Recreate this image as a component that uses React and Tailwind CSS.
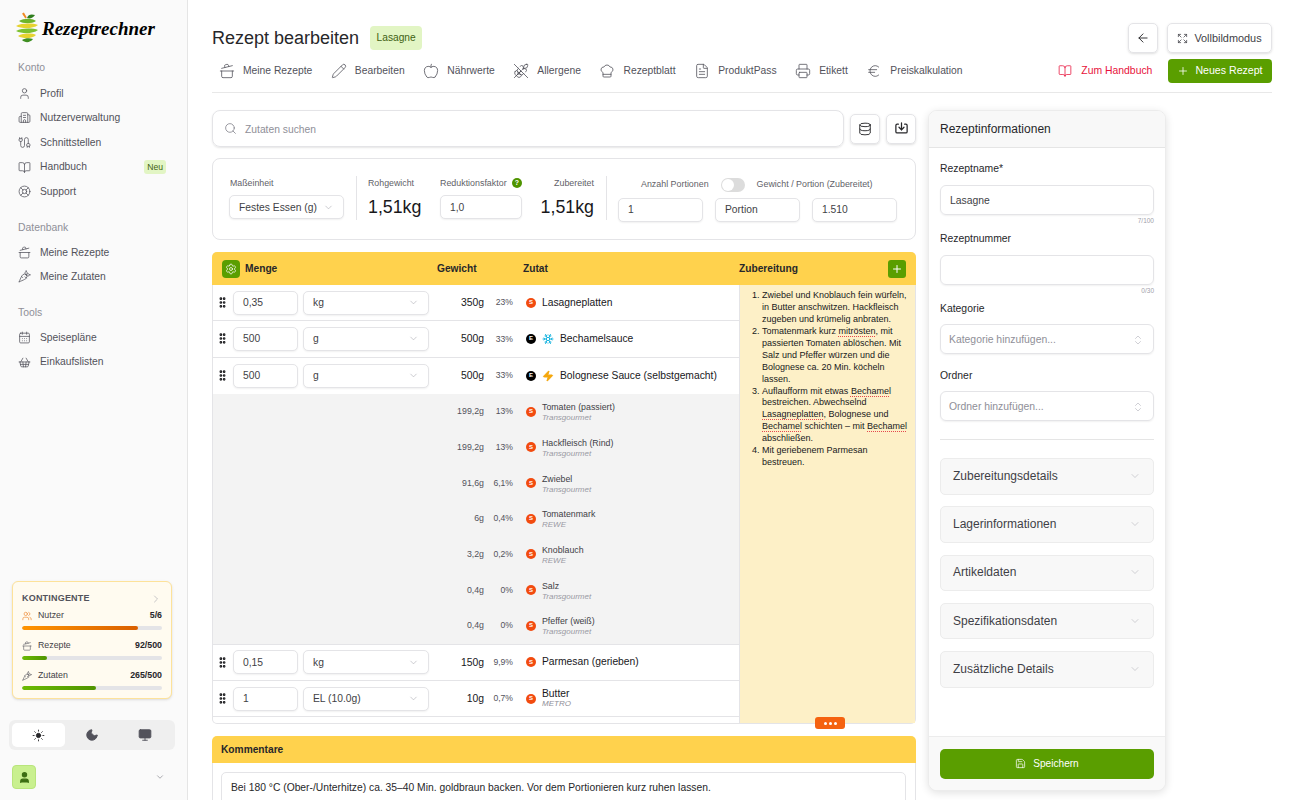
import React from "react";
import {
  Apple, ArrowLeft, BookOpen, Building2, Cable, CalendarDays, Carrot, ChefHat, ChevronDown, ChevronRight,
  ChevronsUpDown, CookingPot, Database, Euro, Expand, FileText, GripVertical, LifeBuoy, Monitor, Moon, Pencil,
  Plus, Printer, Save, Search, Settings, ShoppingBasket, Snowflake, Sun, User, Users, WheatOff, Zap,
} from "lucide-react";

const Logo = () => (
  <div className="flex items-center gap-[3px] h-[36px]">
    <svg width="24" height="32" viewBox="0 0 24 32" fill="none">
      <path d="M11 6 C10 4 9 3 8 1" stroke="#f08a24" strokeWidth="2" />
      <path d="M12 6 C13 2 17 2 20 3 C18 6 15 7 12 6Z" fill="#2f7d1e" />
      <path d="M4 9 C9 6 17 6 21 9 C17 12 8 12 4 9Z" fill="#6fb52c" />
      <path d="M1 14 C7 11 17 11 23 13 C18 17 7 17 1 14Z" fill="#e6d32f" />
      <path d="M1 19 C7 16 18 16 23 18 C18 22 7 22 1 19Z" fill="#7cc030" />
      <path d="M3 24 C8 21 17 21 21 23 C17 27 8 27 3 24Z" fill="#e6d32f" />
      <path d="M7 28 C10 26 15 26 18 27 C15 31 10 31 7 28Z" fill="#3f8f22" />
    </svg>
    <span className="text-[19px] leading-none font-bold italic text-black font-['Liberation_Serif',serif]">
      Rezeptrechner
    </span>
  </div>
);

const SideItem = ({ icon: Icon, label, badge }) => (
  <div className="flex items-center h-[24.6px] pl-[18px] pr-[21px] text-[#52525b]">
    <Icon size={13} strokeWidth={1.4} className="text-[#52525b] shrink-0" />
    <span className="ml-[9px] text-[10.3px]">{label}</span>
    {badge && (
      <span className="ml-auto bg-[#e2f5c4] text-[#3f6212] text-[8.6px] leading-none px-[3px] py-[3px] rounded-[3px]">
        {badge}
      </span>
    )}
  </div>
);

const SideTitle = ({ children, className }) => (
  <div className={`pl-[18px] h-[18px] flex items-center text-[10.4px] text-[#8f8f98] ${className}`}>{children}</div>
);

const Quota = ({ icon: Icon, label, value, max, pct, bar, iconColor }) => (
  <div className="mt-[9px] first:mt-0">
    <div className="flex items-center h-[14px] text-[8.8px] text-[#3f3f46]">
      <Icon size={10} strokeWidth={1.4} className={iconColor} />
      <span className="ml-[6px]">{label}</span>
      <span className="ml-auto font-bold text-[#27272a]">
        {value}/{max}
      </span>
    </div>
    <div className="mt-[3px] h-[4px] rounded-full bg-[#e4e4e7] overflow-hidden">
      <div className={`h-full rounded-full bg-gradient-to-r ${bar}`} style={{ width: `${pct}%` }} />
    </div>
  </div>
);

const Sidebar = () => (
  <aside className="w-[188px] h-full shrink-0 bg-[#fafafa] border-r border-[#e5e5e5] flex flex-col">
    <div className="pl-[15px] pt-[10px]">
      <Logo />
    </div>
    <SideTitle className="mt-[13px] mb-[4px]">Konto</SideTitle>
    <SideItem icon={User} label="Profil" />
    <SideItem icon={Building2} label="Nutzerverwaltung" />
    <SideItem icon={Cable} label="Schnittstellen" />
    <SideItem icon={BookOpen} label="Handbuch" badge="Neu" />
    <SideItem icon={LifeBuoy} label="Support" />
    <SideTitle className="mt-[15px] mb-[3px]">Datenbank</SideTitle>
    <SideItem icon={CookingPot} label="Meine Rezepte" />
    <SideItem icon={Carrot} label="Meine Zutaten" />
    <SideTitle className="mt-[15px] mb-[3px]">Tools</SideTitle>
    <SideItem icon={CalendarDays} label="Speisepläne" />
    <SideItem icon={ShoppingBasket} label="Einkaufslisten" />

    <div className="mt-auto ml-[12px] mr-[15px] h-[118px] rounded-[6px] border border-[#fde29a] bg-[#fffbf0] shadow-sm px-[9px] pt-[10px]">
      <div className="flex items-center justify-between h-[13px] mb-[4px]">
        <span className="text-[9px] font-bold tracking-[0.2px] text-[#52525b]">KONTINGENTE</span>
        <ChevronRight size={12} strokeWidth={1.2} className="text-[#a1a1aa]" />
      </div>
      <div>
        <Quota icon={Users} label="Nutzer" value="5" max="6" pct={83} bar="from-[#ff9500] to-[#d95f00]" iconColor="text-[#ea7a1a]" />
        <Quota icon={CookingPot} label="Rezepte" value="92" max="500" pct={18} bar="from-[#6cbb04] to-[#4f9400]" iconColor="text-[#52525b]" />
        <Quota icon={Carrot} label="Zutaten" value="265" max="500" pct={53} bar="from-[#6cbb04] to-[#4f9400]" iconColor="text-[#52525b]" />
      </div>
    </div>

    <div className="mt-[21px] ml-[9px] mr-[12px] h-[30px] rounded-[6px] bg-[#efefef] p-[3px] flex">
      <div className="flex-1 rounded-[5px] bg-white flex items-center justify-center">
        <Sun size={13} strokeWidth={1.6} className="text-[#27272a]" fill="#27272a" />
      </div>
      <div className="flex-1 flex items-center justify-center">
        <Moon size={14} strokeWidth={1.6} className="text-[#52525b]" fill="#52525b" />
      </div>
      <div className="flex-1 flex items-center justify-center">
        <Monitor size={14} strokeWidth={1.6} className="text-[#52525b]" fill="#52525b" />
      </div>
    </div>

    <div className="mt-[15px] mb-[11px] pl-[12px] pr-[22px] flex items-center justify-between">
      <div className="w-[24px] h-[24px] rounded-[4px] bg-[#c9f08f] border border-[#b9e57c] flex items-center justify-center">
        <User size={13} strokeWidth={2} className="text-[#3c6e12]" fill="#3c6e12" />
      </div>
      <ChevronDown size={10} strokeWidth={1.4} className="text-[#71717a]" />
    </div>
  </aside>
);

const NavItem = ({ icon: Icon, label }) => (
  <div className="flex items-center text-[#52525b]">
    <Icon size={16} strokeWidth={1.2} />
    <span className="ml-[8px] text-[10.3px]">{label}</span>
  </div>
);

const inputClass =
  "h-[24px] rounded-[5px] border border-[#e4e4e7] bg-white shadow-[0_1px_2px_rgba(0,0,0,0.06)] flex items-center text-[10.3px] text-[#3f3f46]";

const Menu = ({ className, children }) => (
  <div className={`${inputClass} px-[9px] justify-between ${className}`}>
    <span>{children}</span>
    <ChevronDown size={11} strokeWidth={1.2} className="text-[#a1a1aa]" />
  </div>
);

const Field = ({ className, children }) => <div className={`${inputClass} px-[9px] ${className}`}>{children}</div>;

const Grade = ({ letter, black }) => (
  <span
    className={`w-[10px] h-[10px] rounded-full shrink-0 flex items-center justify-center text-[6px] font-bold text-white ${
      black ? "bg-black" : "bg-[#f24b0f]"
    }`}
  >
    {letter}
  </span>
);

const Row = ({ amount, unit, weight, pct, name, sub, letter = "S", black, icon, border }) => (
  <div className={`h-[36.3px] flex items-center ${border ? "border-b border-[#e4e4e7]" : ""}`}>
    <GripVertical size={13} strokeWidth={3} className="ml-[3px] text-[#18181b] shrink-0" />
    <Field className="ml-[4px] w-[65px] shrink-0">{amount}</Field>
    <Menu className="ml-[5px] w-[126px] shrink-0">{unit}</Menu>
    <span className="w-[55px] text-right text-[10.4px] text-[#18181b] shrink-0">{weight}</span>
    <span className="w-[29px] text-right text-[8.6px] text-[#52525b] shrink-0">{pct}</span>
    <span className="ml-[13px] flex items-center">
      <Grade letter={letter} black={black} />
    </span>
    {icon && <span className="ml-[6px] w-[12px] flex justify-center">{icon}</span>}
    <div className="ml-[6px] leading-none">
      <div className="text-[10.3px] text-[#18181b]">{name}</div>
      {sub && <div className="text-[8px] italic text-[#8f8f98] mt-[1px]">{sub}</div>}
    </div>
  </div>
);

const SubRow = ({ weight, pct, name, sub }) => (
  <div className="h-[35.7px] flex items-center">
    <span className="ml-[200px] w-[71px] text-right text-[8.8px] text-[#52525b]">{weight}</span>
    <span className="w-[29px] text-right text-[8.6px] text-[#52525b]">{pct}</span>
    <span className="ml-[13px]">
      <Grade letter="S" />
    </span>
    <div className="ml-[6px] pt-[2px] leading-none">
      <div className="text-[8.8px] text-[#3f3f46]">{name}</div>
      <div className="text-[8px] italic text-[#9a9aa3] mt-[2px]">{sub}</div>
    </div>
  </div>
);

const Spell = ({ children }) => (
  <span className="underline decoration-dotted decoration-[#e5484d] underline-offset-2">{children}</span>
);

const Accordion = ({ label }) => (
  <div className="h-[36.5px] mb-[11.8px] pb-[1px] rounded-[5px] border border-[#ececec] bg-[#f8f8f8] px-[12px] flex items-center justify-between">
    <span className="text-[12px] text-[#3f3f46]">{label}</span>
    <ChevronDown size={12} strokeWidth={1.2} className="text-[#b4b4bb]" />
  </div>
);

const InfoLabel = ({ children }) => <div className="h-[14px] flex items-center text-[10.4px] text-[#27272a]">{children}</div>;

const InfoInput = ({ children, count }) => (
  <>
    <div className="mt-[9px] h-[30px] pt-[1px] rounded-[6px] border border-[#e4e4e7] shadow-[0_1px_2px_rgba(0,0,0,0.06)] px-[9px] flex items-center text-[10.4px] text-[#3f3f46]">
      {children}
    </div>
    <div className="h-[11px] text-right text-[6.5px] leading-[11px] text-[#a1a1aa]">{count}</div>
  </>
);

const InfoSelect = ({ children }) => (
  <div className="mt-[8px] h-[30px] pt-[1px] rounded-[6px] border border-[#e4e4e7] shadow-[0_1px_2px_rgba(0,0,0,0.06)] pl-[8px] pr-[9px] flex items-center justify-between text-[10.4px] text-[#8f8f98]">
    {children}
    <ChevronsUpDown size={12} strokeWidth={1} className="text-[#a1a1aa]" />
  </div>
);

const InfoCard = () => (
  <div className="w-[238px] h-[681px] shrink-0 rounded-[9px] border border-[#ececec] bg-white shadow-[0_2px_8px_rgba(0,0,0,0.12)] flex flex-col overflow-hidden">
    <div className="h-[37px] shrink-0 bg-[#f8f8f8] border-b border-[#e5e5e5] px-[11px] flex items-center text-[12px] text-[#27272a]">
      Rezeptinformationen
    </div>
    <div className="flex-1 px-[11px] pt-[14px]">
      <InfoLabel>Rezeptname*</InfoLabel>
      <InfoInput count="7/100">Lasagne</InfoInput>
      <div className="mt-[6px]">
        <InfoLabel>Rezeptnummer</InfoLabel>
      </div>
      <InfoInput count="0/30"></InfoInput>
      <div className="mt-[6px]">
        <InfoLabel>Kategorie</InfoLabel>
      </div>
      <InfoSelect>Kategorie hinzufügen...</InfoSelect>
      <div className="mt-[15px]">
        <InfoLabel>Ordner</InfoLabel>
      </div>
      <InfoSelect>Ordner hinzufügen...</InfoSelect>
      <div className="mt-[18px] mb-[18px] border-t border-[#e5e5e5]" />
      <Accordion label="Zubereitungsdetails" />
      <Accordion label="Lagerinformationen" />
      <Accordion label="Artikeldaten" />
      <Accordion label="Spezifikationsdaten" />
      <Accordion label="Zusätzliche Details" />
    </div>
    <div className="h-[54px] shrink-0 bg-[#f9f9f9] border-t border-[#ececec] px-[11px] pt-[11.5px]">
      <div className="h-[30px] rounded-[5px] bg-[#5a9e00] flex items-center justify-center text-white text-[10.1px]">
        <Save size={11} strokeWidth={1.6} />
        <span className="ml-[7px]">Speichern</span>
      </div>
    </div>
  </div>
);

export default function App() {
  return (
    <div className="h-screen flex overflow-hidden bg-white font-['Liberation_Sans',sans-serif]">
      <Sidebar />
      <main className="flex-1 min-w-0 pl-[24px] pr-[19px] pt-[23px]">
        <div className="h-[30px] flex items-center">
          <h1 className="text-[18px] font-normal text-[#27272a]">Rezept bearbeiten</h1>
          <span className="ml-[11px] h-[24px] w-[52px] justify-center rounded-[4px] bg-[#e2f5c4] text-[#3f6212] text-[10.2px] flex items-center">
            Lasagne
          </span>
          <div className="ml-auto w-[30px] h-[30px] rounded-[5px] border border-[#e4e4e7] shadow-sm flex items-center justify-center">
            <ArrowLeft size={14} strokeWidth={1.6} className="text-[#27272a]" />
          </div>
          <div className="ml-[9px] w-[105px] h-[30px] rounded-[5px] border border-[#e4e4e7] shadow-sm flex items-center justify-center text-[10.9px] text-[#3f3f46]">
            <Expand size={11} strokeWidth={1.6} />
            <span className="ml-[6px]">Vollbildmodus</span>
          </div>
        </div>
        <div className="mt-[6px] h-[34px] pb-[9px] pl-[7px] flex items-center gap-[18.6px] border-b border-[#e8e8e8]">
          <NavItem icon={CookingPot} label="Meine Rezepte" />
          <NavItem icon={Pencil} label="Bearbeiten" />
          <NavItem icon={Apple} label="Nährwerte" />
          <NavItem icon={WheatOff} label="Allergene" />
          <NavItem icon={ChefHat} label="Rezeptblatt" />
          <NavItem icon={FileText} label="ProduktPass" />
          <NavItem icon={Printer} label="Etikett" />
          <NavItem icon={Euro} label="Preiskalkulation" />
          <div className="ml-auto flex items-center text-[#e7123b]">
            <BookOpen size={14} strokeWidth={1.3} />
            <span className="ml-[9px] text-[10.4px]">Zum Handbuch</span>
          </div>
          <div className="-ml-[3px] w-[104px] h-[24px] rounded-[4px] bg-[#5a9e00] text-white flex items-center justify-center text-[10.6px]">
            <Plus size={12} strokeWidth={1.6} />
            <span className="ml-[6px]">Neues Rezept</span>
          </div>
        </div>

        <div className="mt-[17px] flex gap-[12px] items-start">
          <div className="w-[704px] shrink-0">
            <div className="flex items-center">
              <div className="w-[632px] h-[37px] rounded-[8px] border border-[#e4e4e7] shadow-[0_1px_2px_rgba(0,0,0,0.1)] px-[11px] flex items-center text-[10.3px] text-[#8f8f98]">
                <Search size={13} strokeWidth={1.3} className="text-[#71717a]" />
                <span className="ml-[8px] pt-[2px]">Zutaten suchen</span>
              </div>
              <div className="ml-[6px] w-[30px] h-[30px] rounded-[5px] border border-[#e4e4e7] shadow-sm flex items-center justify-center">
                <Database size={14} strokeWidth={1.6} className="text-[#27272a]" />
              </div>
              <div className="ml-[6px] w-[30px] h-[30px] rounded-[5px] border border-[#e4e4e7] shadow-sm flex items-center justify-center">
                <svg width="15" height="15" viewBox="0 0 24 24" fill="none" stroke="#27272a" strokeWidth="2" strokeLinecap="round" strokeLinejoin="round">
                  <path d="M7 5H5a2 2 0 0 0-2 2v10a2 2 0 0 0 2 2h14a2 2 0 0 0 2-2V7a2 2 0 0 0-2-2h-2" />
                  <path d="M12 3v11" />
                  <path d="M8 10l4 4 4-4" />
                </svg>
              </div>
            </div>

            <div className="mt-[11px] h-[82px] rounded-[8px] border border-[#e4e4e7] flex items-center pl-[16px] pb-[2px]">
              <div className="w-[115px] shrink-0">
                <div className="pl-[1px] text-[8.8px] text-[#5f5f68] h-[12px] leading-[12px]">Maßeinheit</div>
                <Menu className="mt-[6px] w-[115px] pt-[1px]">Festes Essen (g)</Menu>
              </div>
              <div className="ml-[12px] w-px h-[44px] bg-[#e4e4e7]" />
              <div className="ml-[11px] w-[60px] shrink-0">
                <div className="text-[8.8px] text-[#5f5f68] h-[12px] leading-[12px]">Rohgewicht</div>
                <div className="mt-[6px] text-[17.8px] h-[24px] leading-[24px] text-[#18181b]">1,51kg</div>
              </div>
              <div className="ml-[12px] w-[82px] shrink-0">
                <div className="text-[8.9px] text-[#5f5f68] h-[12px] leading-[12px] flex items-center justify-between whitespace-nowrap">
                  Reduktionsfaktor
                  <span className="w-[10px] h-[10px] rounded-full bg-[#4f9400] text-white text-[7px] font-bold flex items-center justify-center">?</span>
                </div>
                <Field className="mt-[6px] pt-[1px]">1,0</Field>
              </div>
              <div className="ml-[14px] w-[58px] shrink-0 text-right">
                <div className="text-[8.9px] text-[#5f5f68] h-[12px] leading-[12px]">Zubereitet</div>
                <div className="mt-[6px] text-[17.8px] h-[24px] leading-[24px] text-[#18181b]">1,51kg</div>
              </div>
              <div className="ml-[12px] w-px h-[44px] bg-[#e4e4e7]" />
              <div className="ml-[11px] w-[279px] shrink-0 pt-[2px]">
                <div className="h-[16px] flex items-center text-[8.9px] text-[#5f5f68]">
                  <span className="ml-[23px]">Anzahl Portionen</span>
                  <span className="ml-[12px] w-[24px] h-[14px] rounded-full bg-[#dcdcdc] p-[1px] flex">
                    <span className="w-[12px] h-[12px] rounded-full bg-white" />
                  </span>
                  <span className="ml-[12px] whitespace-nowrap">Gewicht / Portion (Zubereitet)</span>
                </div>
                <div className="mt-[5px] flex justify-between">
                  <Field className="w-[85px]">1</Field>
                  <Field className="w-[85px]">Portion</Field>
                  <Field className="w-[85px]">1.510</Field>
                </div>
              </div>
            </div>

            <div className="relative mt-[12px] rounded-[5px] border-b border-x border-[#e4e4e7]">
              <div className="-mx-px h-[33px] rounded-t-[5px] bg-[#ffd24d] flex items-center text-[10.2px] font-bold text-[#27272a]">
                <div className="w-[225px] shrink-0 pl-[10px] flex items-center">
                  <span className="w-[18px] h-[18px] rounded-[4px] bg-[#5a9e00] flex items-center justify-center">
                    <Settings size={12} strokeWidth={1.5} className="text-white" />
                  </span>
                  <span className="ml-[5px]">Menge</span>
                </div>
                <span className="w-[86px] shrink-0">Gewicht</span>
                <span className="w-[216px] shrink-0">Zutat</span>
                <span>Zubereitung</span>
                <span className="ml-auto mr-[10px] w-[18px] h-[18px] rounded-[3px] bg-[#5a9e00] flex items-center justify-center">
                  <Plus size={12} strokeWidth={2} className="text-white" />
                </span>
              </div>
              <div className="flex h-[438px]">
                <div className="flex-1 min-w-0">
                  <Row border amount="0,35" unit="kg" weight="350g" pct="23%" name="Lasagneplatten" />
                  <Row border amount="500" unit="g" weight="500g" pct="33%" name="Bechamelsauce" letter="E" black icon={<Snowflake size={12} strokeWidth={2} className="text-[#1cb5e0]" />} />
                  <Row amount="500" unit="g" weight="500g" pct="33%" name="Bolognese Sauce (selbstgemacht)" letter="E" black icon={<Zap size={12} className="text-[#f5a70c]" fill="#f5a70c" />} />
                  <div className="bg-[#f3f3f3] border-b border-[#e4e4e7]">
                    <SubRow weight="199,2g" pct="13%" name="Tomaten (passiert)" sub="Transgourmet" />
                    <SubRow weight="199,2g" pct="13%" name="Hackfleisch (Rind)" sub="Transgourmet" />
                    <SubRow weight="91,6g" pct="6,1%" name="Zwiebel" sub="Transgourmet" />
                    <SubRow weight="6g" pct="0,4%" name="Tomatenmark" sub="REWE" />
                    <SubRow weight="3,2g" pct="0,2%" name="Knoblauch" sub="REWE" />
                    <SubRow weight="0,4g" pct="0%" name="Salz" sub="Transgourmet" />
                    <SubRow weight="0,4g" pct="0%" name="Pfeffer (weiß)" sub="Transgourmet" />
                  </div>
                  <Row border amount="0,15" unit="kg" weight="150g" pct="9,9%" name="Parmesan (gerieben)" />
                  <Row border amount="1" unit="EL (10.0g)" weight="10g" pct="0,7%" name="Butter" sub="METRO" />
                </div>
                <div className="w-[176px] shrink-0 bg-[#fdf0c7] border-l border-[#e4e4e7] pl-[22px] pr-[5px] pt-[5px] text-[9px] leading-[11.93px] text-[#18181b]">
                  <ol className="list-decimal">
                    <li>Zwiebel und Knoblauch fein würfeln, in Butter anschwitzen. Hackfleisch zugeben und krümelig anbraten.</li>
                    <li>Tomatenmark kurz <Spell>mitrösten</Spell>, mit passierten Tomaten ablöschen. Mit Salz und Pfeffer würzen und die Bolognese ca. 20 Min. köcheln lassen.</li>
                    <li>Auflaufform mit etwas <Spell>Bechamel</Spell> bestreichen. Abwechselnd <Spell>Lasagneplatten</Spell>, Bolognese und <Spell>Bechamel</Spell> schichten – mit <Spell>Bechamel</Spell> abschließen.</li>
                    <li>Mit geriebenem Parmesan bestreuen.</li>
                  </ol>
                </div>
              </div>
              <div className="absolute left-[602px] -bottom-[6px] w-[30px] h-[12px] rounded-[3px] bg-[#f5620f] flex items-center justify-center gap-[2px]">
                <span className="w-[3px] h-[3px] rounded-full bg-white" />
                <span className="w-[3px] h-[3px] rounded-full bg-white" />
                <span className="w-[3px] h-[3px] rounded-full bg-white" />
              </div>
            </div>

            <div className="mt-[12px] h-[27px] pt-[1px] rounded-t-[5px] bg-[#ffd24d] pl-[9px] flex items-center text-[10.2px] font-bold text-[#27272a]">
              Kommentare
            </div>
            <div className="pl-[8px] pr-[9px] pt-[9px] border-x border-[#e4e4e7]">
              <div className="rounded-[5px] border border-[#e4e4e7] h-[60px] px-[9px] pt-[7px] text-[10.3px] text-[#27272a]">
                Bei 180 °C (Ober-/Unterhitze) ca. 35–40 Min. goldbraun backen. Vor dem Portionieren kurz ruhen lassen.
              </div>
            </div>
          </div>
          <InfoCard />
        </div>
      </main>
    </div>
  );
}
